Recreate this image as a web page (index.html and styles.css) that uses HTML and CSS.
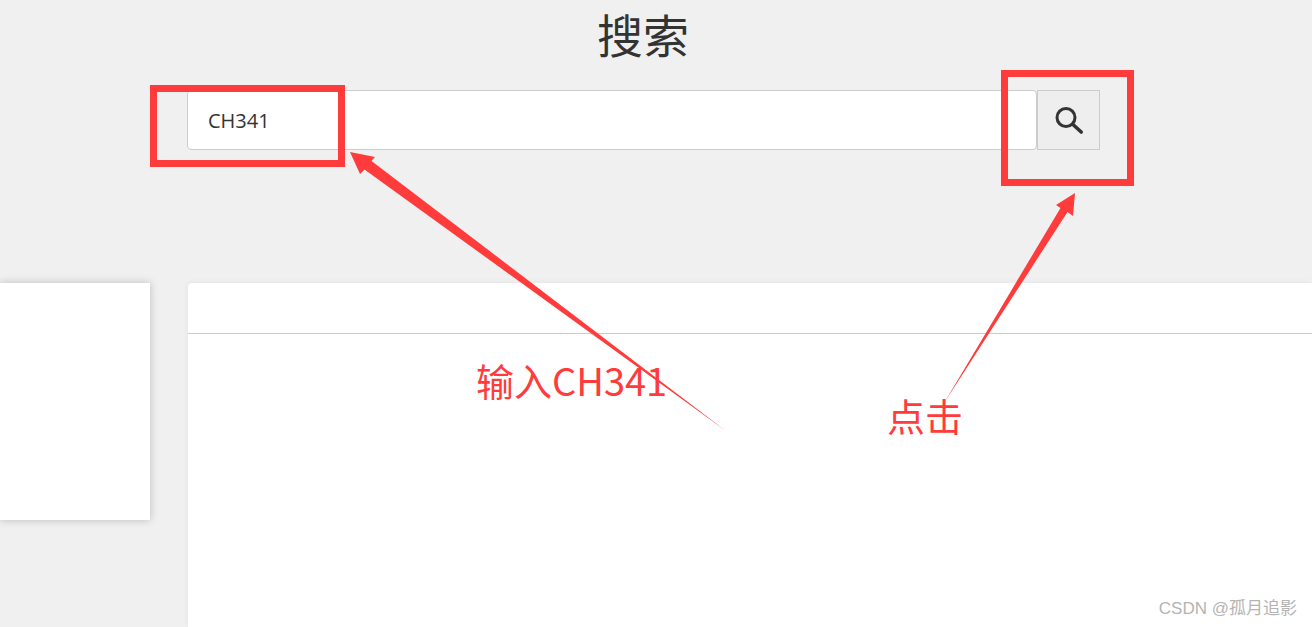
FILE: index.html
```html
<!DOCTYPE html>
<html lang="zh-CN">
<head>
<meta charset="utf-8">
<title>搜索</title>
<link rel="stylesheet" href="styles.css">
</head>
<body>
<div class="page">
  <h1 class="title">搜索</h1>
  <div class="search-row">
    <div class="search-input">CH341</div>
    <button class="search-btn" type="button" aria-label="搜索">
      <svg class="search-icon" viewBox="0 0 30 30" width="30" height="30">
        <circle cx="12" cy="12.5" r="9" fill="none" stroke="#333" stroke-width="3"/>
        <path d="M19 19.5 L27.2 27" fill="none" stroke="#333" stroke-width="3.6" stroke-linecap="round"/>
      </svg>
    </button>
  </div>
  <div class="content">
    <aside class="sidebar"></aside>
    <main class="panel"><div class="panel-head"></div></main>
  </div>
</div>

<svg class="arrows" width="1312" height="627" viewBox="0 0 1312 627">
  <path class="arrow" d="M350 152 L375 157 L371.500 161 L726 431 L364.500 169.500 L360 174 Z"/>
  <path class="arrow" d="M1075 193 L1073 216 L1067.500 212 L944 403 L1060.500 208 L1056 205 Z"/>
</svg>
<div class="mark mark-input"></div>
<div class="mark mark-btn"></div>
<div class="note note-input">输入CH341</div>
<div class="note note-click">点击</div>
<div class="watermark">CSDN @孤月追影</div>
</body>
</html>
```

FILE: styles.css
```css
html, body {
  margin: 0;
  height: 627px;
  overflow: hidden;
  background: #f0f0f0;
}
body {
  position: relative;
  font-family: "Noto Sans CJK SC", "Noto Sans", sans-serif;
}
.page {
  display: flex;
  flex-direction: column;
  height: 627px;
}
.title {
  margin: 0;
  padding-right: 26px;
  height: 66px;
  line-height: 66px;
  font-size: 46px;
  font-weight: 400;
  color: #333;
  text-align: center;
}
.search-row {
  display: flex;
  margin: 24px 0 0 187px;
  width: 913px;
  height: 60px;
}
.search-input {
  flex: 1;
  box-sizing: border-box;
  padding-left: 20px;
  line-height: 60px;
  font-family: "Open Sans", sans-serif;
  font-size: 20px;
  color: #333;
  background: #fff;
  border: 1px solid #ccc;
  border-radius: 4px;
}
.search-btn {
  display: flex;
  align-items: center;
  justify-content: center;
  box-sizing: border-box;
  width: 63px;
  height: 60px;
  padding: 0;
  background: #eee;
  border: 1px solid #ccc;
}
.search-icon {
  display: block;
}
.content {
  display: flex;
  align-items: flex-start;
  gap: 38px;
  margin-top: 133px;
  flex: 1;
}
.sidebar {
  width: 150px;
  height: 237px;
  flex: none;
  background: #fff;
  box-shadow: 0 0 8px rgba(0, 0, 0, 0.22);
}
.panel {
  flex: 1;
  align-self: stretch;
  background: #fff;
  border-radius: 4px 0 0 0;
  box-shadow: 0 0 6px rgba(0, 0, 0, 0.06);
}
.panel-head {
  height: 50px;
  border-bottom: 1px solid #ccc;
}
.arrows {
  position: absolute;
  left: 0;
  top: 0;
  pointer-events: none;
}
.arrow {
  fill: #ff3b3b;
}
.mark {
  position: absolute;
  box-sizing: border-box;
  border: 7px solid #ff3b3b;
}
.mark-input {
  left: 150px;
  top: 85px;
  width: 195px;
  height: 82px;
}
.mark-btn {
  left: 1001px;
  top: 70px;
  width: 133px;
  height: 116px;
}
.note {
  position: absolute;
  font-size: 38px;
  line-height: 50px;
  color: #ff3b3b;
  white-space: nowrap;
}
.note-input {
  left: 476px;
  top: 355px;
}
.note-click {
  left: 887px;
  top: 390px;
}
.watermark {
  position: absolute;
  right: 15px;
  top: 597px;
  font-family: "Liberation Sans", "Noto Sans CJK SC", sans-serif;
  font-size: 17px;
  line-height: 24px;
  color: #b4b4b4;
  white-space: nowrap;
}
```
